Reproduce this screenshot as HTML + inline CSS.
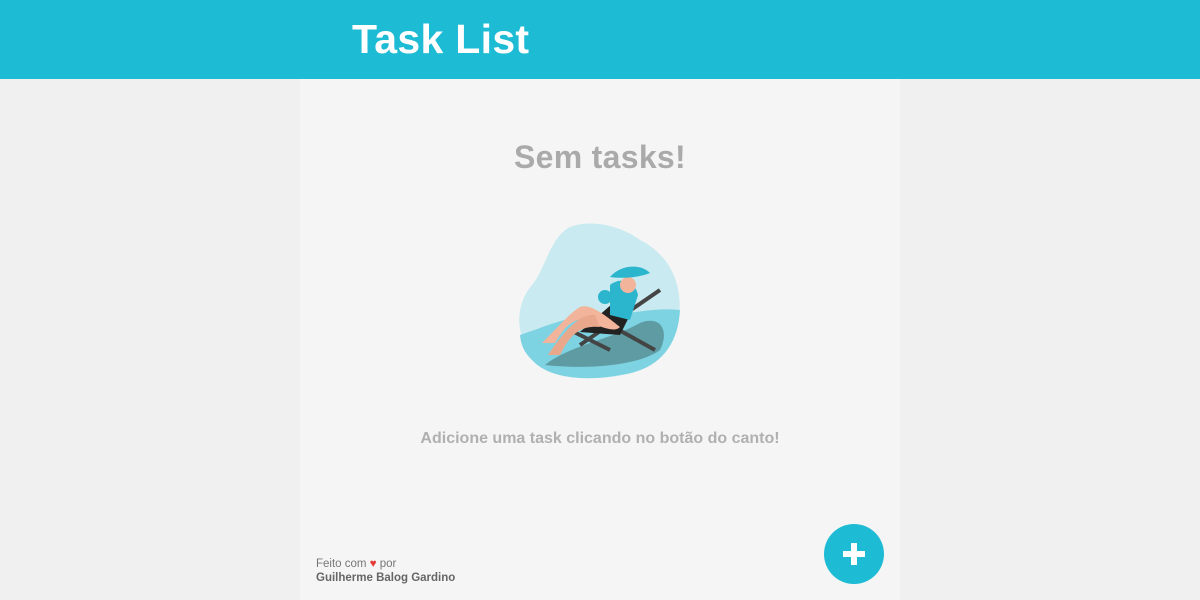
<!DOCTYPE html>
<html><head><meta charset="utf-8"><style>
body{margin:0;width:1200px;height:600px;background:#f0f0f0;font-family:"Liberation Sans",sans-serif;overflow:hidden;position:relative}
.hdr{position:absolute;left:0;top:0;width:1200px;height:79px;background:#1ebbd5}
.hdr h1{position:absolute;left:352px;top:16px;margin:0;color:#fff;font-size:41px;font-weight:bold;letter-spacing:0.3px;line-height:46px}
.panel{position:absolute;left:300px;top:79px;width:600px;height:521px;background:#f5f5f5}
.t{position:absolute;left:0;width:600px;text-align:center;color:#aaa;font-weight:bold}
.btn{position:absolute;left:824px;top:524px;width:60px;height:60px;border-radius:50%;background:#1ebbd5}
.btn:before{content:"";position:absolute;left:19px;top:27px;width:22px;height:6px;background:#fff}
.btn:after{content:"";position:absolute;left:27px;top:19px;width:6px;height:22px;background:#fff}
.ft{position:absolute;left:316px;top:557px;font-size:11.5px;color:#777;line-height:14px}
</style></head><body>
<div class="hdr"><h1>Task List</h1></div>
<div class="panel">
<div class="t" style="top:58px;font-size:32px;line-height:40px;letter-spacing:0.3px">Sem tasks!</div>
<div class="t" style="top:350px;font-size:16px;line-height:20px;font-weight:bold;color:#b0b0b0">Adicione uma task clicando no botão do canto!</div>
</div>
<svg style="position:absolute;left:510px;top:215px" width="180" height="170" viewBox="0 0 180 170">
<path d="M60 12 C80 4 110 10 130 25 C160 40 175 70 168 110 C162 140 130 160 100 162 C70 166 40 160 22 140 C5 120 5 90 22 70 C35 55 40 22 60 12Z" fill="#c8eaf0"/>
<path d="M10 120 C40 110 60 100 90 100 C120 100 140 92 170 95 C168 130 150 155 110 160 C80 166 40 165 22 145 C14 137 11 130 10 120Z" fill="#7dd3e2"/>
<path d="M35 150 C60 130 100 125 130 108 C150 100 160 115 150 135 C130 150 80 155 35 150Z" fill="#5e9ba3"/>
<path d="M70 130 L150 75 M100 135 L60 115 M145 135 L100 110" stroke="#444" stroke-width="4"/>
<path d="M70 117 L110 120 L125 90 L110 82 Z" fill="#222"/>
<path d="M32 128 L45 128 C55 110 65 103 75 105 C90 112 105 118 110 112 C95 100 80 88 70 92 C60 98 50 110 32 128Z" fill="#f2b49a"/>
<path d="M38 140 L50 140 C60 120 70 110 90 112 L85 100 C70 98 55 115 38 140Z" fill="#e9a78c"/>
<path d="M100 70 C110 62 125 65 128 80 L120 105 L100 100 Z" fill="#2cb6cd"/>
<circle cx="118" cy="70" r="8" fill="#f2b49a"/>
<path d="M100 62 C110 50 130 48 140 58 C130 62 115 64 100 62Z" fill="#2cb6cd"/>
<circle cx="95" cy="82" r="7" fill="#2cb6cd"/>
</svg>
<div class="btn"></div>
<div class="ft">Feito com <span style="color:#e53935">♥</span> por<br><b style="color:#666">Guilherme Balog Gardino</b></div>
</body></html>
